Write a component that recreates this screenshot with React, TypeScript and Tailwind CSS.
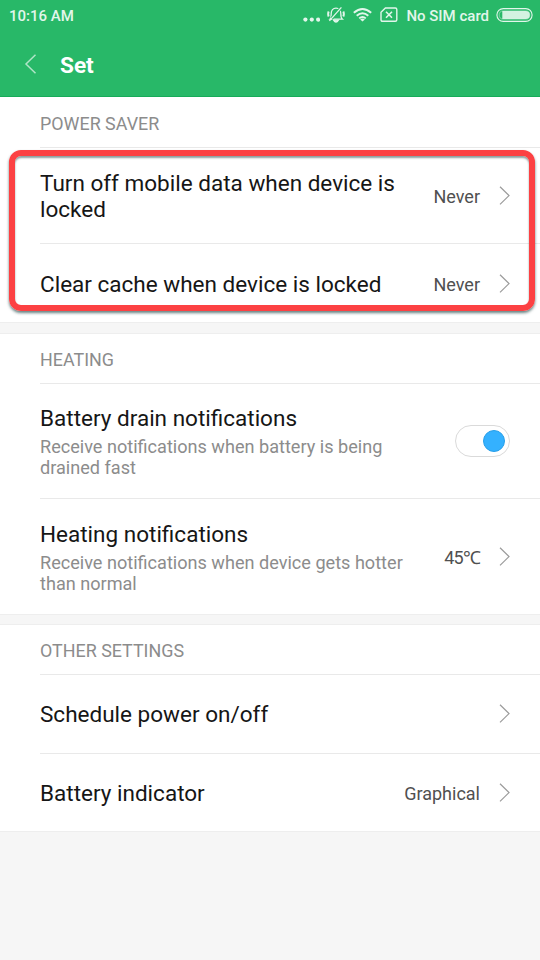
import React from "react";

function Chevron() {
  return (
    <svg className="h-5 w-3 shrink-0" viewBox="0 0 12 20" fill="none" stroke="#9b9b9b" strokeWidth="1.2">
      <path d="M1 0.8L10 9.6L1 18.4" />
    </svg>
  );
}

function StatusBar() {
  return (
    <div className="flex h-8 items-center pl-[9px] pr-[7px] text-[15px] font-medium leading-[18px] text-[#e2f6eb]">
      <span className="flex-1 pb-px">10:16 AM</span>
      <svg className="mr-[7px] h-8 w-[17px]" viewBox="0 0 17 32" fill="currentColor">
        <circle cx="2.4" cy="19.6" r="2.1" />
        <circle cx="8.8" cy="19.6" r="2.1" />
        <circle cx="15.1" cy="19.6" r="2.1" />
      </svg>
      <svg className="mr-[8px] h-8 w-[18px]" viewBox="0 0 18 32" fill="none" stroke="currentColor" strokeWidth="1.3">
        <path d="M3 19.2C4.3 18 4.2 16.3 4.2 13.5C4.2 10.3 6 8.2 9 8.2C12 8.2 13.8 10.3 13.8 13.5C13.8 16.3 14 18 15.4 19.2Z" />
        <path d="M6.6 20.2Q9 24 11.4 20.2Z" fill="currentColor" />
        <path d="M1.7 11.5Q0.6 14 1.7 16.5M16.3 11.5Q17.4 14 16.3 16.5" strokeWidth="2" />
        <path d="M4.4 18.7L13 8.9" stroke="#28b868" strokeWidth="3" />
        <path d="M2.4 20.9L14.4 7.4" />
      </svg>
      <svg className="mr-[8px] h-8 w-[19px]" viewBox="0 0 19 32" fill="none" stroke="currentColor" strokeWidth="1.9">
        <path d="M0.8 12.8Q9.5 5.2 18.2 12.8M3.7 15.8Q9.5 10.7 15.3 15.8M6.2 18.4Q9.5 15.6 12.8 18.4" />
        <path d="M7.2 19.4Q9.5 17.7 11.8 19.4L9.5 21.6Z" fill="currentColor" stroke="none" />
      </svg>
      <svg className="mr-[8px] h-8 w-[18px]" viewBox="0 0 18 32" fill="none" stroke="currentColor" strokeWidth="1.4">
        <path d="M5.4 8H15.3Q16.8 8 16.8 9.5V19.8Q16.8 21.3 15.3 21.3H2.5Q1 21.3 1 19.8V12.3Z" />
        <path d="M6 11.7L12 17.7M12 11.7L6 17.7" strokeWidth="1.6" />
      </svg>
      <span className="mr-[7px] pb-px">No SIM card</span>
      <svg className="h-8 w-[37px]" viewBox="0 0 37 32" fill="none" stroke="currentColor">
        <rect x="0.9" y="8.6" width="35.2" height="12.8" rx="6.4" strokeWidth="1.1" />
        <rect x="3.2" y="10.9" width="30.6" height="8.2" rx="4.1" strokeWidth="0.8" opacity="0.55" />
        <path d="M6.3 10.9H29.7A4.1 4.1 0 0 1 29.7 19.1H6.3Z" fill="currentColor" stroke="none" opacity="0.92" />
      </svg>
    </div>
  );
}

function SectionTitle({ children }: { children: React.ReactNode }) {
  return (
    <h2 className="ml-10 flex h-[50px] items-center border-b border-[#e9e9e9] pt-[3px] text-[17.9px] leading-5 text-[#8c8c8c]">
      {children}
    </h2>
  );
}

type RowProps = {
  title: React.ReactNode;
  description?: React.ReactNode;
  value?: React.ReactNode;
  className: string;
  control?: React.ReactNode;
};

function Row({ title, description, value, className, control }: RowProps) {
  return (
    <div className={`ml-10 flex items-center pr-[29px] ${className}`}>
      <div className="flex-1 whitespace-nowrap pt-[2px]">
        <div className="text-[22.53px] leading-[26px] text-[#161616]">{title}</div>
        {description && (
          <div className="mt-1 text-[18.1px] leading-[21px] text-[#8c8c8c]">{description}</div>
        )}
      </div>
      {value && <span className="mr-[19px] pt-[2px] text-[18px] leading-5 text-[#505050]">{value}</span>}
      {control ?? <Chevron />}
    </div>
  );
}

function Toggle() {
  return (
    <div className="mr-px flex h-8 w-[55px] items-center justify-end rounded-full border border-[#dadada] pr-1">
      <div className="size-[22px] rounded-full border border-[#289fe9] bg-[#34b1ff]" />
    </div>
  );
}

export default function App() {
  return (
    <div className="relative h-[960px] w-[540px] overflow-hidden bg-[#f6f6f6] font-['Roboto',sans-serif]">
      <header className="h-[97px] border-b border-[#17ab59] bg-[#28b868]">
        <StatusBar />
        <div className="flex h-16 items-center pl-6">
          <svg className="mr-[23px] h-5 w-[13px]" viewBox="0 0 13 20" fill="none" stroke="#b0e5c8" strokeWidth="1.5">
            <path d="M11.5 0.8L2 10L11.5 19.2" />
          </svg>
          <h1 className="pt-[3px] text-[22.6px] font-bold leading-7 text-white">Set</h1>
        </div>
      </header>

      <section className="h-[226px] border-b border-[#eeeeee] bg-white pt-px">
        <SectionTitle>POWER SAVER</SectionTitle>
        <Row
          title={<>Turn off mobile data when device is<br />locked</>}
          value="Never"
          className="h-24 border-b border-[#e9e9e9] pt-px"
        />
        <Row title="Clear cache when device is locked" value="Never" className="h-[79px] pt-px" />
      </section>

      <section className="mt-[10px] h-[282px] border-y border-[#eeeeee] bg-white">
        <SectionTitle>HEATING</SectionTitle>
        <Row
          title="Battery drain notifications"
          description={<>Receive notifications when battery is being<br />drained fast</>}
          className="h-[115px] border-b border-[#e9e9e9]"
          control={<Toggle />}
        />
        <Row
          title="Heating notifications"
          description={<>Receive notifications when device gets hotter<br />than normal</>}
          value={<span className="tracking-[-0.8px]">45℃</span>}
          className="h-[115px]"
        />
      </section>

      <section className="mt-[9px] h-[208px] border-y border-[#eeeeee] bg-white">
        <SectionTitle>OTHER SETTINGS</SectionTitle>
        <Row title="Schedule power on/off" className="h-[79px] border-b border-[#e9e9e9]" />
        <Row title="Battery indicator" value="Graphical" className="h-[78px]" />
      </section>

      <div className="absolute left-[9px] top-[150px] h-[161px] w-[526px] rounded-xl border-6 border-[#fc4143] shadow-[0_2px_3px_rgba(0,45,45,0.6),inset_0_2px_2px_rgba(0,45,45,0.45)]" />
    </div>
  );
}
